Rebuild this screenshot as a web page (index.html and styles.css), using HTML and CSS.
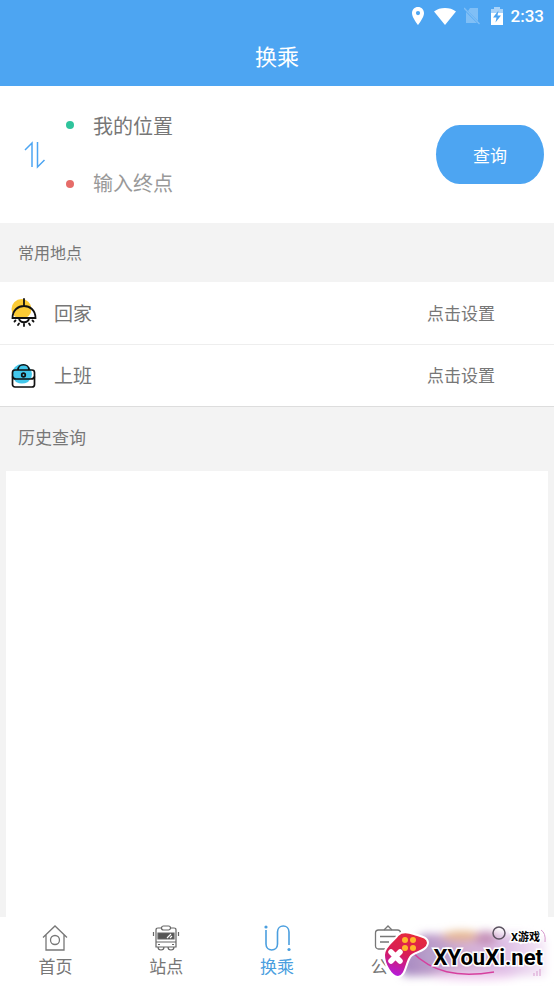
FILE: index.html
```html
<!DOCTYPE html>
<html lang="zh-CN">
<head>
<meta charset="utf-8">
<meta name="viewport" content="width=device-width, initial-scale=1">
<title>换乘</title>
<link rel="stylesheet" href="styles.css">
</head>
<body>
<header class="top">
  <div class="status">
    <svg width="14" height="18" viewBox="0 0 14 18"><path fill="#fff" fill-rule="evenodd" d="M7 0C3.500 0 1 2.700 1 6.200 1 10.500 7 18 7 18s6-7.500 6-11.800C13 2.700 10.500 0 7 0zm0 4a2.100 2.100 0 1 1 0 4.200A2.100 2.100 0 0 1 7 4z"/></svg>
    <svg class="wifi" width="22" height="17" viewBox="0 0 22 17"><path fill="#fff" d="M0 3.500C6-1.100 16-1.100 22 3.500L11 17z"/></svg>
    <svg class="sim" width="16" height="18" viewBox="0 0 16 18"><path fill="#80bff6" d="M6 1h8v13L4 4zM2 5l11 11H2z"/><path stroke="#80bff6" stroke-width="1.300" d="M0 1l15.500 16"/></svg>
    <svg class="battery" width="12" height="18" viewBox="0 0 12 18"><path fill="#a9d3f9" d="M3 0h6v2h3v5H0V2h3z"/><path fill="#fff" d="M0 6h12v12H0z"/><path fill="#4da5f2" d="M7.500 3.500L2 10.500h3.500L4.500 15.500 10 8.500H6.500z"/></svg>
    <time class="clock">2:33</time>
  </div>
  <h1 class="title">换乘</h1>
</header>
<main class="main">
  <form class="route">
    <button class="swap" type="button" aria-label="交换起点和终点">
      <svg width="22" height="28" viewBox="0 0 22 28" fill="none" stroke="#4da5f2" stroke-width="1.500"><path d="M1 9L8 2v24"/><path d="M13.500 1v25L20.500 19"/></svg>
    </button>
    <div class="fields">
      <label class="field"><span class="dot"></span><input class="place" type="text" value="我的位置" aria-label="起点"></label>
      <label class="field"><span class="dot dot-end"></span><input class="place" type="text" placeholder="输入终点" aria-label="终点"></label>
    </div>
    <button class="search" type="button">查询</button>
  </form>
  <h2 class="heading">常用地点</h2>
  <ul class="places">
    <li><button class="row" type="button">
      <svg width="26" height="30" viewBox="0 0 26 30" fill="none" stroke="#111" stroke-width="1.800" stroke-linecap="round"><circle cx="10.500" cy="11" r="10" fill="#fccb35" stroke="none"/><path d="M13 1v7M1.500 20C1.500 4 24.500 4 24.500 20zM8 20.500c1 5 9 5 10 0M4.500 22.500l-1 1M8 25.500L7 27M13 26v2M18 25.500l1 1.500M21.500 22.500l1 1"/></svg>
      <span class="name">回家</span><span class="action">点击设置</span></button></li>
    <li><button class="row" type="button">
      <svg width="26" height="30" viewBox="0 0 26 30" fill="none" stroke="#111" stroke-width="1.700"><circle cx="11" cy="13" r="10" fill="#43c8ec" stroke="none"/><path fill="#fff" stroke="none" d="M2 18h20v8H2z"/><path fill="#43c8ec" stroke="none" d="M2 17h18l-3 4q-6 3-12 0z"/><path d="M7 9c0-7 11-7 11 0"/><rect x="1.500" y="9" width="22" height="17" rx="2.500"/><path d="M1.500 15.500Q2 18 5 18h15Q23 18 23.500 15.500"/><circle cx="12.500" cy="14" r="1.800"/></svg>
      <span class="name">上班</span><span class="action">点击设置</span></button></li>
  </ul>
  <h2 class="heading heading-history">历史查询</h2>
  <section class="history" aria-label="历史查询"></section>
</main>
<nav class="tabs">
  <a class="tab" href="#home"><svg width="28" height="28" viewBox="0 0 28 28" fill="none" stroke="#777" stroke-width="1.300"><path d="M2 13.500L14 2l12 11.500M5 11v15h18V11"/><circle cx="14" cy="16" r="4.500"/></svg><span>首页</span></a>
  <a class="tab" href="#stops"><svg width="28" height="28" viewBox="0 0 28 28" fill="none" stroke="#666" stroke-width="1.200"><path d="M9 4H6Q4 4 4 6v17h20V6q0-2-2-2h-3M4 18h20M1.500 8v4M26.500 8v4M6 23c0 4 6 4 6 0M16 23c0 4 6 4 6 0M6 20.500h2M20 20.500h2"/><rect x="9.500" y="2" width="9" height="4" rx="2"/><path fill="#555" d="M6 9h16v6H6z"/><path stroke="#fff" d="M15 14l4-4M18 14l2-2"/></svg><span>站点</span></a>
  <a class="tab tab-active" href="#transfer" aria-current="page"><svg width="28" height="28" viewBox="0 0 28 28" fill="none" stroke="#4b9fdf" stroke-width="1.600"><path d="M3 6v14c0 8 11.500 8 11.500 0V8c0-8 11.500-8 11.500 0v13"/><circle cx="3" cy="3" r="1.600" fill="#4b9fdf" stroke="none"/><circle cx="26" cy="25.500" r="1.600" fill="#4b9fdf" stroke="none"/></svg><span>换乘</span></a>
  <a class="tab" href="#notice"><svg width="28" height="28" viewBox="0 0 28 28" fill="none" stroke="#777" stroke-width="1.300"><path d="M10 6l4-4 4 4"/><rect x="1.500" y="6" width="25" height="19" rx="3"/><path d="M6 12.500h16M6 18h9"/></svg><span class="short">公</span></a>
  <a class="tab" href="#mine" aria-label="我的"></a>
  <div class="brand">
    <svg width="176" height="66" viewBox="0 0 176 66">
      <defs>
        <filter id="soft" x="-20%" y="-40%" width="140%" height="180%"><feGaussianBlur stdDeviation="4"/></filter>
        <linearGradient id="haze"><stop offset="0" stop-color="#a287c0"/><stop offset=".4" stop-color="#d0abd0"/><stop offset=".7" stop-color="#dcbce3"/><stop offset="1" stop-color="#f6eaf8"/></linearGradient>
        <linearGradient id="pad" x1=".6" y1="0" x2=".3" y2="1"><stop offset="0" stop-color="#e62a3c"/><stop offset=".5" stop-color="#d81d56"/><stop offset="1" stop-color="#b31ce0"/></linearGradient>
      </defs>
      <g filter="url(#soft)"><path fill="url(#haze)" d="M44 14h102l22 6v36H26l-6-12z"/><ellipse cx="84" cy="16" rx="20" ry="5" fill="#e5b58e"/><ellipse cx="108" cy="18" rx="11" ry="7" fill="#c590b8"/><ellipse cx="62" cy="36" rx="18" ry="8" fill="#b6a1cb"/><ellipse cx="96" cy="56" rx="42" ry="4" fill="#f0cff0"/></g>
      <circle cx="121" cy="13" r="6" fill="none" stroke="#5b5260" stroke-width="1.500"/>
      <path d="M34 32c20 20 45 26 82 20" fill="none" stroke="#d6409f" stroke-width="1.500"/>
      <path d="M156 56v-3m3 3v-5m3 5v-7M163 10q5 3 4 12" fill="none" stroke="#d79bce"/>
      <path fill="url(#pad)" stroke="#fff" stroke-width="2" stroke-linejoin="round" d="M20 15c4-4 10-3 16-1 6 2 14 3 14 9-1 8-13 9-17 13-5 5-5 21-13 21-7 0-14-13-14-22 0-9 10-14 14-20z"/>
      <g fill="#ffb629"><circle cx="27" cy="20" r="3"/><circle cx="35" cy="20" r="3"/><circle cx="27" cy="28" r="3"/><circle cx="35" cy="28" r="3"/></g>
      <path d="M13 32l9 9m0-9l-9 9" stroke="#fff" stroke-width="5.500" stroke-linecap="round"/>
    </svg>
    <span class="brand-small">X游戏</span>
    <span class="brand-name">XYouXi.net</span>
  </div>
</nav>
</body>
</html>
```

FILE: styles.css
```css
* { box-sizing: border-box; }

body {
  margin: 0;
  min-height: 100vh;
  display: flex;
  flex-direction: column;
  background: #f3f3f3;
  color: #777;
  font-family: Roboto, "Noto Sans CJK SC", sans-serif;
}

button, input { font: inherit; color: inherit; border: 0; background: none; padding: 0; }
h1, h2, ul { margin: 0; padding: 0; font-weight: 400; list-style: none; }
svg { display: block; flex: none; }

.top { background: #4da5f2; color: #fff; height: 86px; }
.status { display: flex; align-items: center; justify-content: flex-end; height: 32px; padding-right: 10px; }
.wifi { margin-left: 9px; }
.sim { margin-left: 8px; }
.battery { margin-left: 11px; }
.clock { margin-left: 8px; font-size: 17px; font-weight: 500; }
.title { font-size: 22px; line-height: 52px; text-align: center; }

.main { flex: 1; display: flex; flex-direction: column; }

.route { display: flex; align-items: center; height: 137px; padding: 0 10px 0 24px; background: #fff; }
.swap { width: 22px; }
.fields { flex: 1; min-width: 0; display: flex; flex-direction: column; gap: 29px; padding-left: 20px; }
.field { display: flex; align-items: center; gap: 19px; height: 30px; }
.dot { flex: none; width: 8px; height: 8px; border-radius: 50%; background: #2fc49c; }
.dot-end { background: #e66c69; }
.place { flex: 1; min-width: 0; height: 30px; font-size: 20px; outline: 0; }
.place::placeholder { color: #999; opacity: 1; }
.search { width: 108px; height: 59px; border-radius: 24px / 30px; background: #4da5f2; color: #fff; font-size: 17px; }

.heading { padding-left: 18px; font-size: 16px; line-height: 62px; height: 59px; }
.heading-history { font-size: 17px; line-height: 62px; height: 64px; }

.places { background: #fff; border-bottom: 1px solid #ddd; }
.places li + li { border-top: 1px solid #eee; }
.row { display: flex; align-items: center; width: 100%; height: 62px; padding: 0 59px 0 11px; text-align: left; }
.places li + li .row { height: 61px; }
.name { flex: 1; padding-left: 17px; font-size: 19px; }
.action { font-size: 17px; }
.name, .action { padding-bottom: 2px; }

.history { flex: 1; margin: 0 6px; background: #fff; }

.tabs { position: relative; display: flex; height: 69px; background: #fff; overflow: hidden; }
.tab { flex: 1; display: flex; flex-direction: column; align-items: center; padding-top: 7px; color: #777; font-size: 17px; line-height: 30px; text-decoration: none; }
.tab-active { color: #4b9fdf; }
.short { width: 34px; }

/* Sponsor mark laid over the end of the tab bar */
.brand { position: absolute; right: 0; bottom: 0; width: 176px; height: 66px; color: #000; white-space: nowrap; pointer-events: none; }
.brand span { position: absolute; font-weight: 700; paint-order: stroke fill; -webkit-text-stroke: 3px #fff; }
.brand .brand-small { top: 10px; right: 14px; font-size: 11px; line-height: 16px; }
.brand .brand-name { top: 26px; right: 11px; font-size: 22px; line-height: 24px; }
```
